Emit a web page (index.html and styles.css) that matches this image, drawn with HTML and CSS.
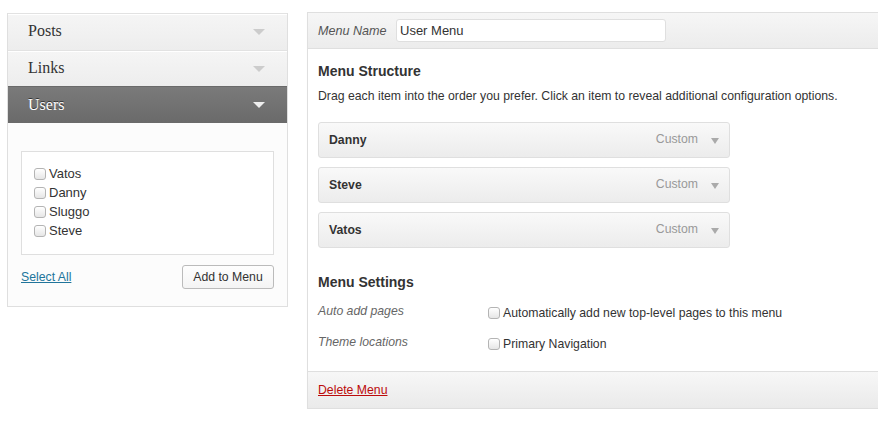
FILE: index.html
```html
<!DOCTYPE html>
<html>
<head>
<meta charset="utf-8">
<link rel="stylesheet" href="styles.css">
</head>
<body>
<div class="page">
  <div class="side">
    <div class="acc">
      <div class="acc-head"><span>Posts</span><i class="tri"></i></div>
      <div class="acc-head"><span>Links</span><i class="tri"></i></div>
      <div class="acc-head open"><span>Users</span><i class="tri"></i></div>
      <div class="acc-body">
        <div class="checklist">
          <label class="ck"><input type="checkbox"> Vatos</label>
          <label class="ck"><input type="checkbox"> Danny</label>
          <label class="ck"><input type="checkbox"> Sluggo</label>
          <label class="ck"><input type="checkbox"> Steve</label>
        </div>
        <div class="actions">
          <a href="#" class="select-all">Select All</a>
          <button class="btn">Add to Menu</button>
        </div>
      </div>
    </div>
  </div>
  <div class="main">
    <div class="main-head">
      <span class="name-label">Menu Name</span>
      <input class="name-input" type="text" value="User Menu">
    </div>
    <div class="main-body">
      <h3>Menu Structure</h3>
      <p class="desc">Drag each item into the order you prefer. Click an item to reveal additional configuration options.</p>
      <ul class="items">
        <li class="item"><b>Danny</b><span class="type">Custom</span><i class="tri small"></i></li>
        <li class="item"><b>Steve</b><span class="type">Custom</span><i class="tri small"></i></li>
        <li class="item"><b>Vatos</b><span class="type">Custom</span><i class="tri small"></i></li>
      </ul>
      <h3 class="settings-h">Menu Settings</h3>
      <div class="setting">
        <span class="s-label">Auto add pages</span>
        <label class="ck"><input type="checkbox"> Automatically add new top-level pages to this menu</label>
      </div>
      <div class="setting">
        <span class="s-label">Theme locations</span>
        <label class="ck"><input type="checkbox"> Primary Navigation</label>
      </div>
    </div>
    <div class="main-foot">
      <a href="#" class="delete">Delete Menu</a>
    </div>
  </div>
</div>
</body>
</html>
```

FILE: styles.css
```css
html, body {
  margin: 0;
  padding: 0;
  background: #fff;
  overflow: hidden;
}
body {
  font-family: "Liberation Sans", Arial, sans-serif;
  font-size: 13px;
  color: #333;
}
.page {
  display: flex;
  align-items: flex-start;
  padding: 12px 0 0 7px;
  width: 1200px;
}
.side {
  width: 281px;
  flex: none;
  margin-top: 1px;
}
.acc {
  border: 1px solid #dfdfdf;
  border-top: none;
  background: #fcfcfc;
}
.acc-head {
  height: 35px;
  display: flex;
  align-items: center;
  justify-content: space-between;
  padding: 0 22px 0 20px;
  background: linear-gradient(#f5f5f5, #ededed);
  border-top: 1px solid #e2e2e2;
  box-shadow: inset 0 1px 0 #fff;
  font-family: "Liberation Serif", Georgia, serif;
  font-size: 16px;
  color: #333;
}
.acc-head:first-child { height: 36px; }
.acc-head span { position: relative; top: -1px; }
.acc-head.open {
  background: linear-gradient(#7a7a7a, #6a6a6a);
  border-top: 1px solid #6a6a6a;
  box-shadow: none;
  color: #fff;
  text-shadow: 0 -1px 0 #333;
  height: 36px;
}
.acc-head.open span { top: 0; }
.tri {
  display: block;
  width: 0;
  height: 0;
  border-left: 6px solid transparent;
  border-right: 6px solid transparent;
  border-top: 6px solid #ccc;
}
.acc-head.open .tri { border-top-color: #eee; }
.acc-body {
  padding: 28px 13px 17px 13px;
}
.checklist {
  border: 1px solid #dfdfdf;
  background: #fff;
  height: 87px;
  padding: 12px 11px 3px 11px;
  display: flex;
  flex-direction: column;
}
.ck {
  display: flex;
  align-items: center;
  height: 19px;
  font-size: 13px;
  color: #333;
}
.ck input {
  appearance: none;
  -webkit-appearance: none;
  width: 12px;
  height: 12px;
  margin: 0 3px 0 1px;
  border: 1px solid #b4b4b4;
  border-radius: 3px;
  background: linear-gradient(#fff, #e6e6e6);
  flex: none;
}
.actions {
  display: flex;
  justify-content: space-between;
  align-items: center;
  margin-top: 10px;
}
.select-all {
  color: #21759b;
  font-size: 12.25px;
  text-decoration: underline;
}
.btn {
  font-family: "Liberation Sans", Arial, sans-serif;
  font-size: 12.25px;
  color: #333;
  height: 24px;
  width: 92px;
  padding: 0;
  border: 1px solid #bbb;
  border-radius: 3px;
  background: linear-gradient(#fefefe, #f4f4f4);
}
.main {
  margin-left: 19px;
  width: 800px;
  flex: none;
  border: 1px solid #dfdfdf;
  border-right: none;
  box-shadow: 0 1px 1px rgba(0,0,0,0.04);
}
.main-head {
  height: 35px;
  display: flex;
  align-items: center;
  padding: 0 10px;
  background: linear-gradient(#f6f6f6, #ececec);
  border-bottom: 1px solid #dfdfdf;
}
.name-label {
  font-style: italic;
  color: #555;
  font-size: 12.6px;
  width: 78px;
}
.name-input {
  box-sizing: border-box;
  width: 270px;
  height: 23px;
  border: 1px solid #dfdfdf;
  border-radius: 3px;
  background: #fff;
  font-family: "Liberation Sans", Arial, sans-serif;
  font-size: 13px;
  color: #333;
  padding: 0 3px;
  margin: 0;
}
.main-body {
  padding: 13px 10px 17px 10px;
}
h3 {
  margin: 0;
  font-size: 14px;
  font-weight: bold;
  color: #333;
  line-height: 18px;
}
.desc {
  margin: 8px 0 18px 0;
  font-size: 12.25px;
  line-height: 16px;
}
.items {
  list-style: none;
  margin: 0;
  padding: 0;
  width: 412px;
}
.item {
  box-sizing: border-box;
  height: 36px;
  margin-bottom: 9px;
  display: flex;
  align-items: center;
  padding: 0 10px 0 10px;
  border: 1px solid #dfdfdf;
  border-radius: 3px;
  background: linear-gradient(#f9f9f9, #ececec);
  font-size: 12.25px;
}
.item b {
  flex: 1;
  color: #333;
  position: relative;
  top: 0;
}
.type {
  color: #999;
  font-size: 12.25px;
  margin-right: 13px;
  position: relative;
  top: -1px;
}
.tri.small {
  border-left-width: 4px;
  border-right-width: 4px;
  border-top: 6px solid #aaa;
  position: relative;
  top: 1px;
}
.settings-h {
  margin-top: 25px;
}
.setting {
  display: flex;
  align-items: flex-start;
  margin-top: 12px;
  height: 20px;
}
.setting + .setting { margin-top: 11px; }
.s-label {
  width: 169px;
  font-style: italic;
  color: #666;
  font-size: 12.25px;
  line-height: 16px;
}
.setting .ck {
  font-size: 12.25px;
  height: 16px;
  position: relative;
  top: 2px;
}
.main-foot {
  height: 36px;
  display: flex;
  align-items: center;
  padding: 0 10px;
  border-top: 1px solid #dfdfdf;
  background: linear-gradient(#f7f7f7, #eaeaea);
}
.delete {
  color: #bc0b0b;
  font-size: 12.25px;
  text-decoration: underline;
}
```
